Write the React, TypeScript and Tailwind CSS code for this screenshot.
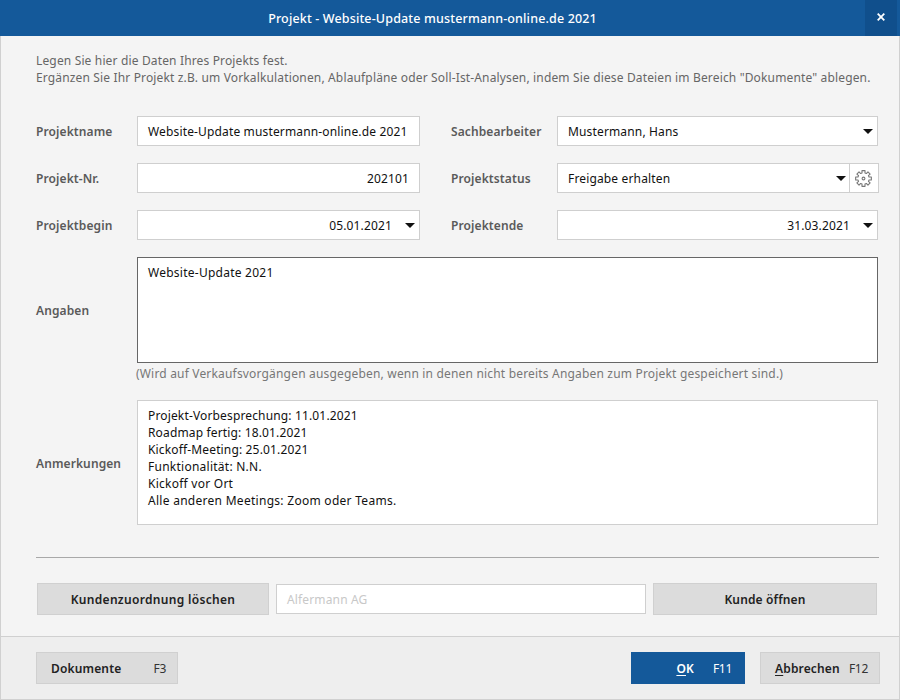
import type { ReactNode } from "react";

const Caret = () => (
  <svg width="10" height="5" viewBox="0 0 10 5" className="shrink-0">
    <path d="M0 0h10L5 5z" fill="#111" />
  </svg>
);

// 8 tooth outline, same shape as the settings gear in the dialog
const gearPath = () => {
  const pt = (r: number, deg: number) => {
    const a = (deg * Math.PI) / 180;
    return `${(8.5 + r * Math.cos(a)).toFixed(2)} ${(8.5 + r * Math.sin(a)).toFixed(2)}`;
  };
  const parts: string[] = [];
  for (let i = 0; i < 8; i++) {
    const c = i * 45 - 90;
    parts.push(pt(5.7, c - 15), pt(8, c - 11), pt(8, c + 11), pt(5.7, c + 15));
  }
  return `M${parts.join("L")}Z`;
};

const GearIcon = () => (
  <svg width="17" height="17" viewBox="0 0 17 17" fill="none" stroke="#777" strokeWidth="1.1" strokeLinejoin="round">
    <path d={gearPath()} />
    <circle cx="8.5" cy="8.5" r="1.4" />
  </svg>
);

const Label = ({ children, className = "" }: { children: ReactNode; className?: string }) => (
  <div className={`font-semibold text-[#5a5a5a] tracking-[0.1px] ${className}`}>{children}</div>
);

const Field = ({ children, className = "" }: { children: ReactNode; className?: string }) => (
  <div className={`flex h-[30px] items-center border border-[#cfcfcf] bg-white pl-[10px] text-[#111] ${className}`}>
    {children}
  </div>
);

export default function App() {
  return (
    <div className="flex h-[700px] w-[900px] flex-col bg-[#f4f4f4] font-['Noto_Sans','Open_Sans',sans-serif] text-[12px] leading-[17px] tracking-[0.15px]">
      <div className="flex h-[36px] shrink-0 items-center bg-[#14599a] pr-[3px]">
        <div className="flex-1 text-center text-[12.5px] font-medium text-white">
          Projekt - Website-Update mustermann-online.de 2021
        </div>
        <div className="flex h-[36px] w-[32px] items-center justify-center bg-[#104f8c] pb-[2px]">
          <svg width="8" height="8" viewBox="0 0 8 8" stroke="white" strokeWidth="1.8">
            <path d="M.7.7l6.6 6.6M7.3.7L.7 7.3" />
          </svg>
        </div>
      </div>

      <div className="flex min-h-0 flex-1 flex-col border-x border-[#d0d0d0] pl-[35px] pr-[21px]">
        <div className="mt-[16px] text-[#666]">
          <div>Legen Sie hier die Daten Ihres Projekts fest.</div>
          <div>
            Ergänzen Sie Ihr Projekt z.B. um Vorkalkulationen, Ablaufpläne oder Soll-Ist-Analysen, indem Sie diese
            Dateien im Bereich "Dokumente" ablegen.
          </div>
        </div>

        <div className="mt-[30px] grid grid-cols-[101px_283px_137px_321px] items-center gap-y-[17px]">
          <Label>Projektname</Label>
          <Field>Website-Update mustermann-online.de 2021</Field>
          <Label className="pl-[31px]">Sachbearbeiter</Label>
          <Field className="justify-between pr-[4px]">
            Mustermann, Hans
            <Caret />
          </Field>

          <Label>Projekt-Nr.</Label>
          <Field className="justify-end pr-[10px]">202101</Field>
          <Label className="pl-[31px]">Projektstatus</Label>
          <div className="flex">
            <Field className="flex-1 justify-between pr-[3px]">
              Freigabe erhalten
              <Caret />
            </Field>
            <div className="ml-[-1px] mr-[-1px] flex h-[30px] w-[30px] items-center justify-center border border-[#cfcfcf] bg-white pr-px">
              <GearIcon />
            </div>
          </div>

          <Label>Projektbegin</Label>
          <Field className="justify-end gap-[13px] pr-[4px]">
            05.01.2021
            <Caret />
          </Field>
          <Label className="pl-[31px]">Projektende</Label>
          <Field className="justify-end gap-[13px] pr-[4px]">
            31.03.2021
            <Caret />
          </Field>
        </div>

        <div className="mt-[17px] flex items-center">
          <Label className="w-[101px]">Angaben</Label>
          <div className="h-[106px] w-[741px] border border-[#666] bg-white px-[10px] pt-[6px] tracking-[0.25px] text-[#111]">
            Website-Update 2021
          </div>
        </div>
        <div className="ml-[100px] mt-[2px] tracking-[0.18px] text-[#777]">
          (Wird auf Verkaufsvorgängen ausgegeben, wenn in denen nicht bereits Angaben zum Projekt gespeichert sind.)
        </div>

        <div className="mt-[18px] flex items-center">
          <Label className="mt-[1px] w-[101px]">Anmerkungen</Label>
          <div className="h-[125px] w-[741px] border border-[#cfcfcf] bg-white px-[10px] pt-[6px] text-[#111]">
            <div>Projekt-Vorbesprechung: 11.01.2021</div>
            <div>Roadmap fertig: 18.01.2021</div>
            <div>Kickoff-Meeting: 25.01.2021</div>
            <div className="tracking-[0.25px]">Funktionalität: N.N.</div>
            <div className="tracking-[0.25px]">Kickoff vor Ort</div>
            <div className="tracking-[0.28px]">Alle anderen Meetings: Zoom oder Teams.</div>
          </div>
        </div>

        <div className="mr-[-1px] mt-[32px] h-px bg-[#a8a8a8]" />

        <div className="ml-px mt-[25px] flex items-center">
          <div className="flex h-[32px] w-[232px] items-center justify-center border border-[#d0d0d0] bg-[#dcdcdc] font-semibold tracking-[0.32px] text-[#222]">
            Kundenzuordnung löschen
          </div>
          <div className="ml-[7px] flex h-[30px] w-[370px] items-center border border-[#cfcfcf] bg-white pl-[10px] text-[#c8c8c8]">
            Alfermann AG
          </div>
          <div className="ml-[7px] flex h-[32px] w-[224px] items-center justify-center border border-[#d0d0d0] bg-[#dcdcdc] font-semibold text-[#222]">
            Kunde öffnen
          </div>
        </div>
      </div>

      <div className="flex h-[64px] shrink-0 items-start border border-[#d0d0d0] bg-[#eeeeee] pl-[35px] pr-[19px] pt-[15px]">
        <div className="flex h-[32px] w-[142px] items-center justify-between border border-[#d0d0d0] bg-[#dcdcdc] pl-[14px] pr-[11px] text-[#222]">
          <span className="font-semibold">Dokumente</span>
          <span className="tracking-[-0.3px] text-[#333]">F3</span>
        </div>
        <div className="ml-auto flex h-[32px] w-[114px] items-center justify-end bg-[#14599a] pr-[13px] text-white">
          <span className="font-semibold">
            <span className="underline underline-offset-2">O</span>K
          </span>
          <span className="ml-[19px] tracking-[-0.3px]">F11</span>
        </div>
        <div className="ml-[15px] flex h-[32px] w-[120px] items-center justify-between border border-[#d0d0d0] bg-[#dcdcdc] pl-[14px] pr-[11px] text-[#222]">
          <span className="font-semibold">
            <span className="underline underline-offset-2">A</span>bbrechen
          </span>
          <span className="tracking-[-0.3px] text-[#333]">F12</span>
        </div>
      </div>
    </div>
  );
}
